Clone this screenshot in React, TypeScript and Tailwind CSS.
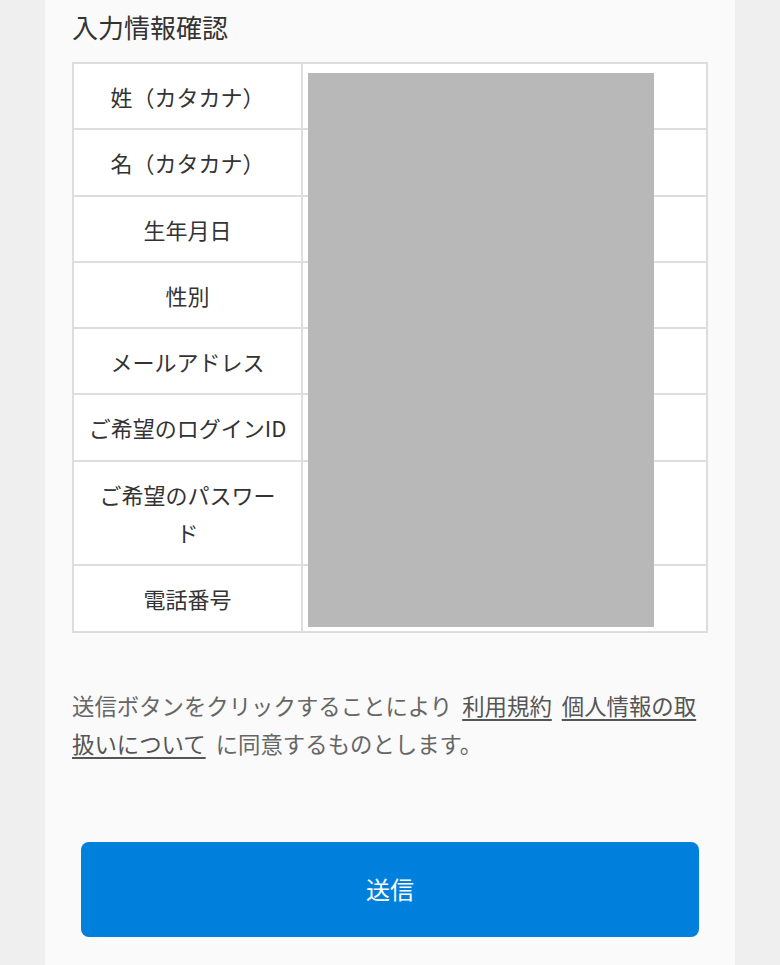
import React from "react";

const rows: { label: React.ReactNode; tall?: boolean }[] = [
  { label: "姓（カタカナ）" },
  { label: "名（カタカナ）" },
  { label: "生年月日" },
  { label: "性別" },
  { label: "メールアドレス" },
  { label: "ご希望のログインID" },
  {
    label: (
      <>
        ご希望のパスワー
        <br />ド
      </>
    ),
  },
  { label: "電話番号" },
];

export default function App() {
  return (
    <div
      className="min-h-[965px] w-full bg-[#efefef]"
      style={{ fontFamily: '"Noto Sans CJK JP", "Noto Sans", sans-serif' }}
    >
      <div className="mx-[45px] min-h-[965px] bg-[#fafafa] px-[27px] pt-[7px]">
        <h1 className="text-[26px] leading-[40px] text-[#333]">入力情報確認</h1>

        <div className="relative mt-[15px]">
          <table className="w-full border-collapse border-2 border-[#dddddd] bg-white">
            <tbody>
              {rows.map((row, i) => (
                <tr key={i}>
                  <td className="w-[229px] whitespace-nowrap border-2 border-[#dddddd] px-3 py-[13px] text-center text-[22px] leading-[38.3px] text-[#333]">
                    {row.label}
                  </td>
                  <td className="border-2 border-[#dddddd]" />
                </tr>
              ))}
            </tbody>
          </table>
          {/* redacted values */}
          <div className="absolute left-[236px] top-[11px] h-[554px] w-[346px] bg-[#b8b8b8]" />
        </div>

        <p className="mt-[53px] text-[22.4px] leading-[38px] text-[#666] [word-spacing:5px]">
          送信ボタンをクリックすることにより{" "}
          <a className="text-[#555] underline underline-offset-4">利用規約</a>{" "}
          <a className="text-[#555] underline underline-offset-4">個人情報の取扱いについて</a>{" "}
          に同意するものとします。
        </p>

        <div className="px-[9px] pt-[80px]">
          <button
            type="button"
            className="flex h-[95px] w-full items-center justify-center rounded-lg bg-[#0080dd] text-[24px] text-white"
          >
            送信
          </button>
        </div>
      </div>
    </div>
  );
}
